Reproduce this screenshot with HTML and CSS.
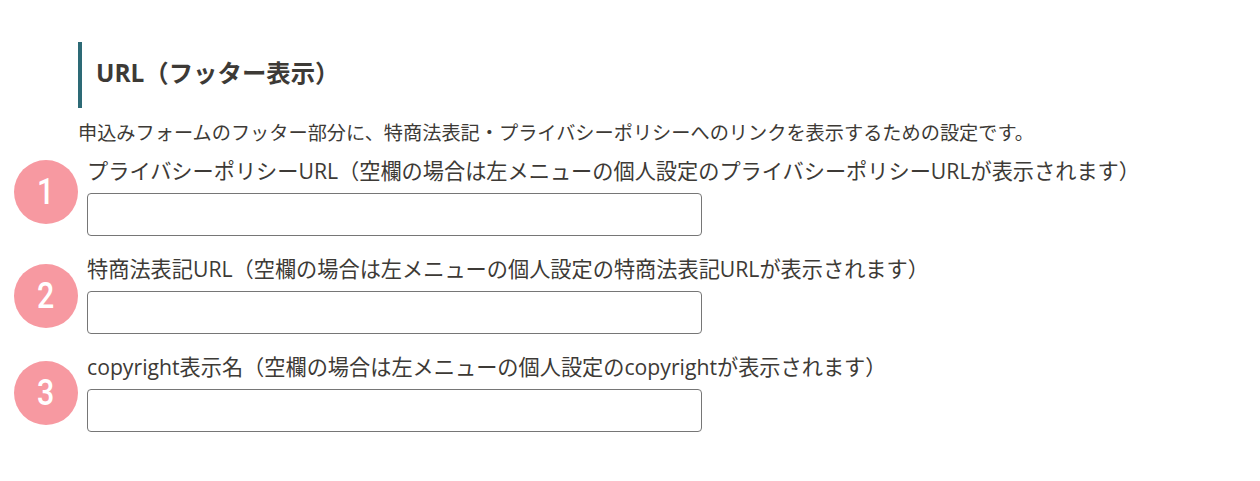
FILE: index.html
```html
<!DOCTYPE html>
<html lang="ja">
<head>
<meta charset="utf-8">
<title>URL（フッター表示）</title>
<link rel="stylesheet" href="styles.css">
</head>
<body>
<main class="page">
  <h2 class="heading">URL（フッター表示）</h2>
  <p class="lead">申込みフォームのフッター部分に、特商法表記・プライバシーポリシーへのリンクを表示するための設定です。</p>
  <div class="fields">
    <div class="field">
      <label class="label" for="u1">プライバシーポリシーURL（空欄の場合は左メニューの個人設定のプライバシーポリシーURLが表示されます）</label>
      <input class="input" id="u1" type="text">
    </div>
    <div class="field">
      <label class="label" for="u2">特商法表記URL（空欄の場合は左メニューの個人設定の特商法表記URLが表示されます）</label>
      <input class="input" id="u2" type="text">
    </div>
    <div class="field">
      <label class="label" for="u3">copyright表示名（空欄の場合は左メニューの個人設定のcopyrightが表示されます）</label>
      <input class="input" id="u3" type="text">
    </div>
  </div>
</main>
<span class="badge badge-1"><span class="digit">1</span></span>
<span class="badge badge-2"><span class="digit">2</span></span>
<span class="badge badge-3"><span class="digit">3</span></span>
</body>
</html>
```
FILE: styles.css
```css
* { box-sizing: border-box; }
html, body { margin: 0; background: #fff; }
body {
  position: relative;
  height: 481px;
  overflow: hidden;
  color: #3d3a36;
  font-family: "Open Sans", "Noto Sans CJK JP", sans-serif;
}
.page { padding: 42px 0 0 78px; }
.heading {
  margin: 0;
  height: 66px;
  padding-left: 14px;
  border-left: 4px solid #2d6a76;
  font-size: 24.4px;
  font-weight: 700;
  line-height: 62px;
}
.lead {
  margin: 13px 0 0;
  font-size: 19.2px;
  line-height: 24px;
  white-space: nowrap;
}
.fields {
  display: flex;
  flex-direction: column;
  gap: 19px;
  margin: 12px 0 0 9px;
}
.field { display: flex; flex-direction: column; }
.label {
  font-size: 21.2px;
  line-height: 27px;
  margin-bottom: 9px;
  white-space: nowrap;
}
.input {
  width: 615px;
  height: 43px;
  border: 1px solid #767676;
  border-radius: 4px;
  background: #fff;
}
.badge {
  position: absolute;
  left: 14px;
  width: 64px;
  height: 64px;
  border-radius: 50%;
  background: #f799a1;
  color: #fff;
  display: flex;
  align-items: center;
  justify-content: center;
  font-family: "Roboto", sans-serif;
  font-size: 37px;
  font-weight: 500;
  line-height: 1;
}
.digit { display: block; transform: scaleX(0.82); }
.badge-1 { top: 159.5px; }
.badge-2 { top: 263.5px; }
.badge-3 { top: 360.5px; }
```
